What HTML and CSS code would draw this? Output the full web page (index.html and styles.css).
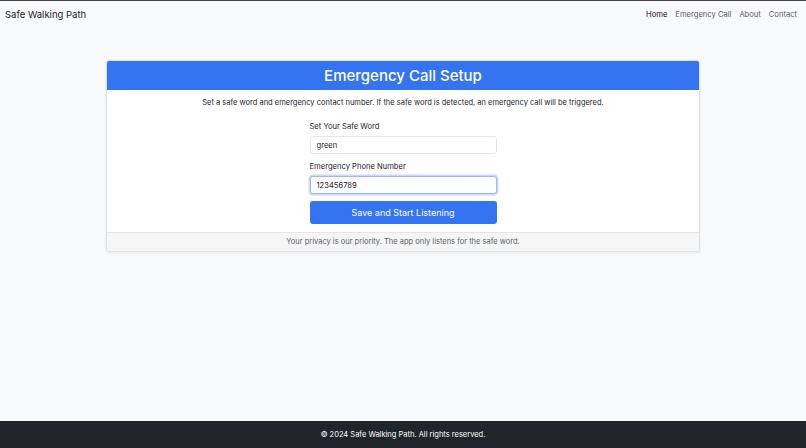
FILE: index.html
```html
<!DOCTYPE html>
<html lang="en">
<head>
<meta charset="utf-8">
<title>Safe Walking Path</title>
<link rel="stylesheet" href="styles.css">
</head>
<body>
<div class="topline"></div>
<nav class="navbar">
  <a class="brand" href="#">Safe Walking Path</a>
  <ul class="nav-links">
    <li><a class="active" href="#">Home</a></li>
    <li><a href="#">Emergency Call</a></li>
    <li><a href="#">About</a></li>
    <li><a href="#">Contact</a></li>
  </ul>
</nav>
<main class="main">
  <div class="card">
    <div class="card-header">Emergency Call Setup</div>
    <div class="card-body">
      <p class="intro">Set a safe word and emergency contact number. If the safe word is detected, an emergency call will be triggered.</p>
      <form class="form">
        <label class="label" for="sw">Set Your Safe Word</label>
        <input class="input" id="sw" type="text" value="green">
        <label class="label" for="ph">Emergency Phone Number</label>
        <input class="input focused" id="ph" type="text" value="123456789">
        <button class="btn" type="button">Save and Start Listening</button>
      </form>
    </div>
    <div class="card-footer">Your privacy is our priority. The app only listens for the safe word.</div>
  </div>
</main>
<footer class="footer">© 2024 Safe Walking Path. All rights reserved.</footer>
</body>
</html>
```

FILE: styles.css
```css
* { box-sizing: border-box; }
html, body { height: 100%; }
body {
  margin: 0;
  font-family: Inter, "Noto Sans", sans-serif;
  background: #f8f9fa;
  color: #212529;
  display: flex;
  flex-direction: column;
}
.topline { height: 1px; background: #4a4244; }
.navbar {
  height: 27px;
  display: flex;
  align-items: center;
  justify-content: space-between;
  padding: 0 9px 0 5px;
}
.brand {
  font-size: 9.5px;
  line-height: 12px;
  color: #212529;
  text-decoration: none;
}
.nav-links {
  list-style: none;
  display: flex;
  align-items: center;
  gap: 8px;
  margin: 0;
  padding: 0;
  font-size: 7.6px;
  line-height: 12px;
}
.nav-links a {
  color: #5c6166;
  text-decoration: none;
}
.nav-links a.active { color: #111; }
.main {
  flex: 1;
  padding-top: 32px;
  display: flex;
  justify-content: center;
}
.card {
  width: 594px;
  align-self: flex-start;
  background: #fff;
  border: 1px solid #dee2e6;
  border-radius: 3px;
  box-shadow: 0 1px 3px rgba(0,0,0,0.08);
  overflow: hidden;
}
.card-header {
  background: #3574f0;
  color: #fff;
  text-align: center;
  font-size: 15px;
  height: 29px;
  line-height: 29px;
  font-weight: 500;
}
.card-body {
  padding: 7px 0 8px;
  display: flex;
  flex-direction: column;
  align-items: center;
}
.intro {
  margin: 0 0 13px;
  font-size: 7.5px;
  line-height: 12px;
  color: #212529;
}
.form {
  width: 187px;
  display: flex;
  flex-direction: column;
}
.label {
  font-size: 7.6px;
  line-height: 10px;
  color: #212529;
  margin-bottom: 4px;
}
.input {
  height: 18px;
  border: 1px solid #e3e6e9;
  border-radius: 3px;
  padding: 0 6px;
  font-family: inherit;
  font-size: 7.6px;
  color: #212529;
  margin-bottom: 8px;
  outline: none;
}
.input.focused {
  border-color: #9cb8f3;
  box-shadow: 0 0 0 1.5px #c9d9fa;
  margin-bottom: 7px;
}
.btn {
  height: 23px;
  border: none;
  border-radius: 3px;
  background: #3574f0;
  color: #fff;
  font-family: inherit;
  font-size: 9px;
}
.card-footer {
  background: #f5f5f5;
  border-top: 1px solid #e3e6e9;
  height: 19px;
  line-height: 18px;
  text-align: center;
  font-size: 7.5px;
  color: #5c6166;
}
.footer {
  height: 27px;
  background: #212529;
  color: #fff;
  font-size: 7.5px;
  text-align: center;
  line-height: 27px;
}
```
